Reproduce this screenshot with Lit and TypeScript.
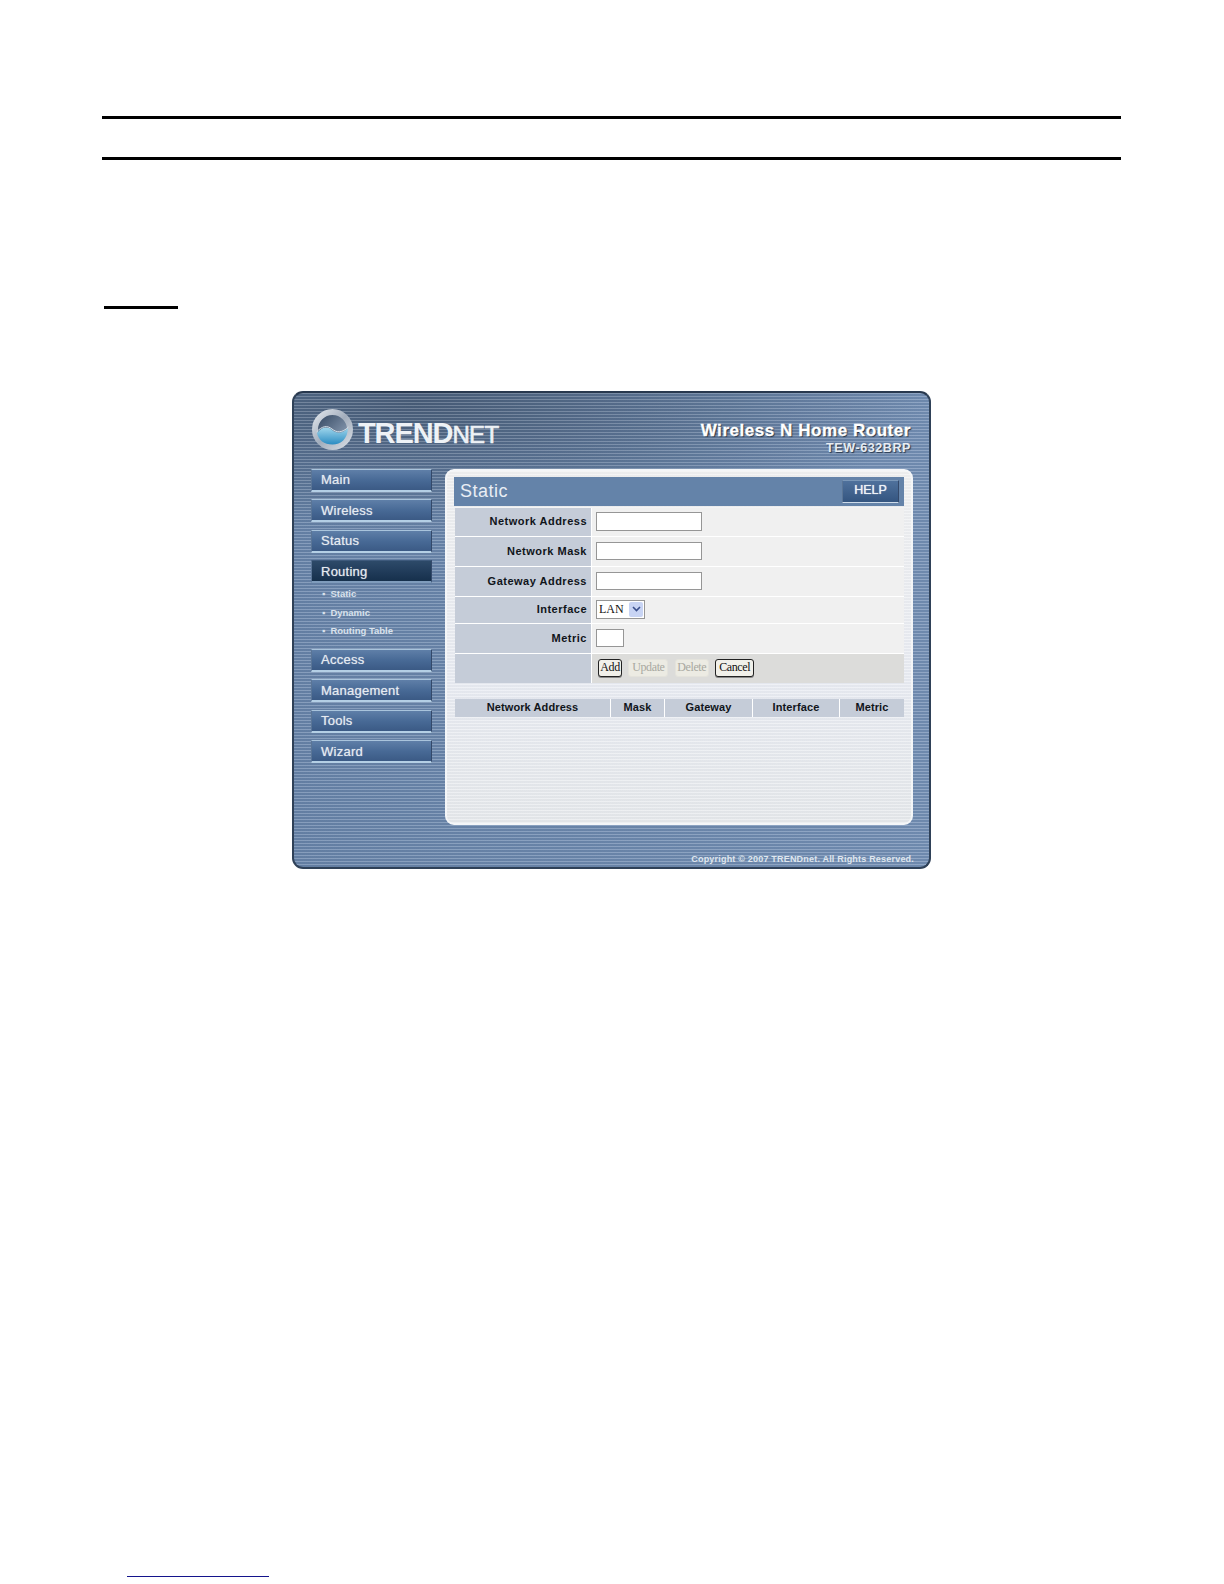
import { LitElement, html, css, svg } from "lit";
import { customElement } from "lit/decorators.js";

const logo = svg`<svg class="mark" viewBox="0 0 41 41" width="41" height="41">
  <defs>
    <linearGradient id="ring" x1="0" y1="0" x2="1" y2="1"><stop offset="0" stop-color="#dfe4ea"/><stop offset=".5" stop-color="#a2adbc"/><stop offset="1" stop-color="#d6dce3"/></linearGradient>
    <linearGradient id="top" x1="0" y1="0" x2="1" y2="1"><stop offset="0" stop-color="#2a3e58"/><stop offset=".75" stop-color="#8496ad"/></linearGradient>
    <linearGradient id="wave" x1="0" y1="0" x2="0" y2="1"><stop offset="0" stop-color="#9fd6ec"/><stop offset="1" stop-color="#2b8cc2"/></linearGradient>
  </defs>
  <circle cx="20.5" cy="20.5" r="17.5" fill="url(#top)" stroke="url(#ring)" stroke-width="6"/>
  <path d="M5 24 C10 18 15 17 20 21 C25 25 30 25 36 19 C35.5 30 29 35.5 20.5 35.5 C12 35.5 6.5 31 5 24Z" fill="url(#wave)"/>
  <path d="M4.5 23 C10 17 15 16 20 20 C25 24 30 24 36.5 18" fill="none" stroke="#d5dfe8" stroke-width="1"/>
</svg>`;

@customElement("app-root")
export class AppRoot extends LitElement {
  static styles = css`
    :host { display: block; width: 1224px; height: 1584px; background: #fff; overflow: hidden; font-family: "Liberation Sans", Arial, sans-serif; }
    .page { padding-top: 116px; }
    .rule { height: 2.5px; background: #000; margin-left: 102px; width: 1019px; }
    .rule.second { margin-top: 38.5px; }
    .short { height: 3px; width: 74px; background: #000; margin: 146px 0 0 104px; }
    .panel {
      box-sizing: border-box; width: 639px; height: 478px; margin: 82px 0 0 292px;
      border: 2px solid #2f4158; border-top-color: #28384e; border-radius: 11px; overflow: hidden;
      background:
        repeating-linear-gradient(180deg, rgba(255,255,255,.2) 0 1px, rgba(0,0,0,.05) 1px 3px),
        radial-gradient(ellipse 520px 130px at 120px 10px, #4a5f7b 0%, rgba(74,95,123,0) 100%),
        linear-gradient(90deg, #6885ab, #7490b6);
    }
    .head { height: 76px; display: flex; justify-content: space-between; box-sizing: border-box; padding: 16px 18px 0 18px; }
    .logo { display: flex; align-items: center; height: 41px; gap: 5px; }
    .mark { display: block; flex: none; }
    .word { color: #eef2f6; font-weight: 700; display: flex; align-items: baseline; line-height: 1; padding-top: 9px; }
    .word .a { font-size: 29px; letter-spacing: -1.1px; }
    .word .b { font-size: 24px; letter-spacing: -.6px; font-weight: 400; -webkit-text-stroke: .6px #eef2f6; }
    .model { text-align: right; color: #fff; padding-top: 12px; }
    .model .t { font: 700 17px/20px "Liberation Sans", sans-serif; letter-spacing: .55px; text-shadow: 1px 1px 1px #1d2c40; -webkit-text-stroke: .3px #fff; }
    .model .m { font: 700 12.5px/14px "Liberation Sans", sans-serif; color: #e8edf3; letter-spacing: .6px; text-shadow: 1px 1px 1px #2a3a50; }
    .body { display: flex; gap: 13px; padding-left: 17px; }
    .side { width: 121px; display: flex; flex-direction: column; gap: 7.5px; }
    .nav {
      box-sizing: border-box; height: 23px; padding: 0 0 0 9px; display: flex; align-items: center;
      color: #e6ebf1; font-size: 13px; letter-spacing: .25px; text-shadow: 0 0 1px rgba(255,255,255,.6);
      border-top: 1px solid #a9c4dc; border-bottom: 2px solid #b4cfe5;
      border-left: 1px solid #5a7596; border-right: 1px solid #34496a;
      background: linear-gradient(180deg, #5f7fa8 0%, #486a96 50%, #3b5a85 100%);
    }
    .nav.on { background: linear-gradient(180deg, #2d4a69 0%, #1f3a58 60%, #16304c 100%); border-top-color: #3e5a7c; border-bottom-color: #7f9cbc; }
    .sub { margin: -5.5px 0 0.5px; display: flex; flex-direction: column; }
    .sub div { height: 18.5px; line-height: 18.5px; padding-left: 11px; font-size: 9.5px; font-weight: 700; color: #d9e2ec; display: flex; gap: 5px; }
    .sub i { font-style: normal; }
    .content {
      box-sizing: border-box; width: 468px; height: 356px; border: 2px solid #f4f6f8; border-radius: 9px; padding: 6px 7px;
      background:
        repeating-linear-gradient(180deg, rgba(255,255,255,.35) 0 1px, rgba(0,0,0,.012) 1px 3px),
        linear-gradient(180deg, #eeeff0 0%, #e7eaf1 60%, #e4e7ea 100%);
    }
    .title { height: 29px; background: #6483a9; display: flex; align-items: center; justify-content: space-between; padding: 0 5px 0 6px; }
    .title h1 { margin: 0; color: #e9eef4; font-size: 18px; font-weight: 400; letter-spacing: .5px; }
    .help {
      box-sizing: border-box; width: 57px; height: 23px; color: #eef2f7; font-size: 12.5px; display: flex; align-items: center; justify-content: center;
      padding-bottom: 3px; text-shadow: 0 0 1px #fff;
      background: linear-gradient(180deg, #4f719c, #345580); border-bottom: 1px solid #cfdcea; border-right: 1px solid #34496a; border-left: 1px solid #5a7596; border-top: 1px solid #7a97b8;
    }
    .form { margin: 2px 0 0 1px; display: grid; grid-template-columns: 137px 1fr; grid-template-rows: 29px 30px 30px 27px 30px 29px; }
    .label {
      box-sizing: border-box; background: #c5ccd8; border-bottom: 1px solid #fff; border-right: 1px solid #fff;
      display: flex; align-items: center; justify-content: flex-end; padding: 0 4px 1px 0;
      font-size: 11px; font-weight: 700; letter-spacing: .5px; color: #10141a;
    }
    .val { box-sizing: border-box; background: #f0f0f0; border-bottom: 1px solid #fff; display: flex; align-items: center; padding-left: 4px; }
    .val.btns { background: #dcdcda; border-bottom: 0; padding-left: 6px; gap: 6.4px; }
    .label.last { border-bottom: 0; }
    input { box-sizing: border-box; height: 18.5px; background: #fff; border: 1px solid #969696; padding: 0; margin: 0; display: block; }
    .wide { width: 106px; }
    .small { width: 28px; }
    .select { box-sizing: border-box; width: 49px; height: 18.5px; border: 1px solid #969696; background: #fff; display: flex; align-items: center; justify-content: space-between; padding: 0 1px 1px 2px; font: 12px "Liberation Serif", serif; color: #111; }
    .arrow { width: 14px; height: 15px; background: #c8d4f4; border-radius: 2px; display: flex; align-items: center; justify-content: center; }
    button {
      box-sizing: border-box; height: 18.5px; padding: 0 0 4px; margin: 0; background: #f1f0ea; border: 1px solid #222; border-radius: 3px;
      font: 12px "Liberation Serif", serif; letter-spacing: -.4px; color: #111; text-align: center; box-shadow: 0 1px 0 #8a8a8a;
    }
    button[disabled] { color: #a8a8a0; border-color: #e4e3dc; box-shadow: none; background: #ecebe3; }
    .b-add { width: 24px; } .b-update { width: 40px; } .b-delete { width: 34px; } .b-cancel { width: 39px; }
    .list { margin: 16px 0 0 1px; display: grid; grid-template-columns: 156px 54px 88px 87px 1fr; height: 18px; }
    .list div {
      box-sizing: border-box; background: #c5ccd8; border-right: 1px solid #fff; display: flex; align-items: center; justify-content: center; padding-bottom: 1px;
      font-size: 11px; font-weight: 700; letter-spacing: .1px; color: #10141a;
    }
    .list div:last-child { border-right: 0; }
    .foot { text-align: right; padding: 28px 15px 0 0; font-size: 9px; font-weight: 700; color: #dfe6ee; letter-spacing: .2px; line-height: 12px; }
    .link { height: 1.5px; width: 142px; background: #14148c; margin: 707px 0 0 127px; }
  `;

  render() {
    const nav = (t: string, on = false) => html`<div class="nav ${on ? "on" : ""}">${t}</div>`;
    return html`<div class="page">
      <div class="rule"></div>
      <div class="rule second"></div>
      <div class="short"></div>
      <div class="panel">
        <div class="head">
          <div class="logo">${logo}<div class="word"><span class="a">TREND</span><span class="b">NET</span></div></div>
          <div class="model"><div class="t">Wireless N Home Router</div><div class="m">TEW-632BRP</div></div>
        </div>
        <div class="body">
          <div class="side">
            ${nav("Main")}${nav("Wireless")}${nav("Status")}${nav("Routing", true)}
            <div class="sub">
              <div><i>▪</i>Static</div><div><i>▪</i>Dynamic</div><div><i>▪</i>Routing Table</div>
            </div>
            ${nav("Access")}${nav("Management")}${nav("Tools")}${nav("Wizard")}
          </div>
          <div class="content">
            <div class="title"><h1>Static</h1><div class="help">HELP</div></div>
            <div class="form">
              <div class="label">Network Address</div><div class="val"><input class="wide" /></div>
              <div class="label">Network Mask</div><div class="val"><input class="wide" /></div>
              <div class="label">Gateway Address</div><div class="val"><input class="wide" /></div>
              <div class="label">Interface</div>
              <div class="val"><div class="select"><span>LAN</span><span class="arrow"><svg width="9" height="6" viewBox="0 0 9 6"><path d="M1 1 L4.5 4.5 L8 1" fill="none" stroke="#3a4f8c" stroke-width="1.6"/></svg></span></div></div>
              <div class="label">Metric</div><div class="val"><input class="small" /></div>
              <div class="label last"></div>
              <div class="val btns">
                <button class="b-add">Add</button>
                <button class="b-update" disabled>Update</button>
                <button class="b-delete" disabled>Delete</button>
                <button class="b-cancel">Cancel</button>
              </div>
            </div>
            <div class="list"><div>Network Address</div><div>Mask</div><div>Gateway</div><div>Interface</div><div>Metric</div></div>
          </div>
        </div>
        <div class="foot">Copyright © 2007 TRENDnet. All Rights Reserved.</div>
      </div>
      <div class="link"></div>
    </div>`;
  }
}
